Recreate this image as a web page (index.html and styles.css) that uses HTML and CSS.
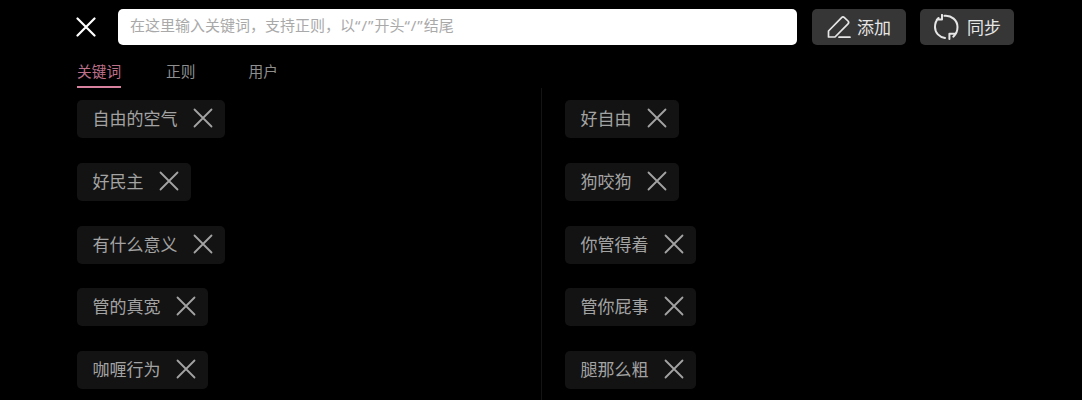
FILE: index.html
```html
<!DOCTYPE html>
<html lang="zh">
<head>
<meta charset="utf-8">
<title>关键词</title>
<link rel="stylesheet" href="styles.css">
</head>
<body>
<div class="page">
  <header class="topbar">
    <svg class="close" viewBox="0 0 20 20"><path d="M1.5 1.5 18.5 18.5M18.5 1.5 1.5 18.5"/></svg>
    <div class="search">在这里输入关键词，支持正则，以<span class="q">“/”</span>开头<span class="q">“/”</span>结尾</div>
    <div class="btn add">
      <svg class="ico" viewBox="0 0 24 24"><path d="M1.5 22v-6L14.6 2.6a2 2 0 0 1 2.8 0l3.6 3.4a2 2 0 0 1 0 2.8L8 22H1.5zM12 22.2h11"/></svg>
      <span>添加</span>
    </div>
    <div class="btn sync">
      <svg class="ico-sync" viewBox="934 13.5 25 27"><path d="M938.5 17.5C936.300 19.800 935 22.800 935 26.500 935 32.300 939.300 36.800 945 37.400M944.500 15.300C951.500 14.600 957.500 19.800 957.500 26.500 957.500 30.200 956 33.800 953.300 36.200M936.800 19H942V14.400M955 33.300H949.400V38.600"/></svg>
      <span>同步</span>
    </div>
  </header>
  <nav class="tabs">
    <div class="tab active">关键词</div>
    <div class="tab second">正则</div>
    <div class="tab">用户</div>
  </nav>
  <main class="lists">
    <section class="col left">
      <div class="chip"><span>自由的空气</span><svg class="x" viewBox="0 0 20 20"><path d="M1.5 1.5 18.5 18.5M18.5 1.5 1.5 18.5"/></svg></div>
      <div class="chip"><span>好民主</span><svg class="x" viewBox="0 0 20 20"><path d="M1.5 1.5 18.5 18.5M18.5 1.5 1.5 18.5"/></svg></div>
      <div class="chip"><span>有什么意义</span><svg class="x" viewBox="0 0 20 20"><path d="M1.5 1.5 18.5 18.5M18.5 1.5 1.5 18.5"/></svg></div>
      <div class="chip"><span>管的真宽</span><svg class="x" viewBox="0 0 20 20"><path d="M1.5 1.5 18.5 18.5M18.5 1.5 1.5 18.5"/></svg></div>
      <div class="chip"><span>咖喱行为</span><svg class="x" viewBox="0 0 20 20"><path d="M1.5 1.5 18.5 18.5M18.5 1.5 1.5 18.5"/></svg></div>
    </section>
    <section class="col right">
      <div class="chip"><span>好自由</span><svg class="x" viewBox="0 0 20 20"><path d="M1.5 1.5 18.5 18.5M18.5 1.5 1.5 18.5"/></svg></div>
      <div class="chip"><span>狗咬狗</span><svg class="x" viewBox="0 0 20 20"><path d="M1.5 1.5 18.5 18.5M18.5 1.5 1.5 18.5"/></svg></div>
      <div class="chip"><span>你管得着</span><svg class="x" viewBox="0 0 20 20"><path d="M1.5 1.5 18.5 18.5M18.5 1.5 1.5 18.5"/></svg></div>
      <div class="chip"><span>管你屁事</span><svg class="x" viewBox="0 0 20 20"><path d="M1.5 1.5 18.5 18.5M18.5 1.5 1.5 18.5"/></svg></div>
      <div class="chip"><span>腿那么粗</span><svg class="x" viewBox="0 0 20 20"><path d="M1.5 1.5 18.5 18.5M18.5 1.5 1.5 18.5"/></svg></div>
    </section>
  </main>
</div>
</body>
</html>
```
FILE: styles.css
```css
* { box-sizing: border-box; }
html, body { margin: 0; padding: 0; background: #000; }
body { font-family: "Noto Sans CJK SC", "Noto Sans", sans-serif; overflow: hidden; }
.page { width: 1082px; height: 400px; overflow: hidden; padding-top: 9px; }

.topbar { display: flex; align-items: center; height: 36px; padding-left: 76px; }
.close { width: 20px; height: 20px; fill: none; stroke: #fff; stroke-width: 2.2; stroke-linecap: round; flex: none; }
.search { width: 679px; height: 36px; margin-left: 22px; padding-left: 12px; background: #fff; border-radius: 5px; color: #a9a9a9; font-family: "Noto Sans", "Noto Sans CJK SC", sans-serif; font-size: 15px; line-height: 33px; white-space: nowrap; }
.q { letter-spacing: 1px; }
.btn { display: flex; align-items: center; width: 94px; height: 36px; background: #363636; border-radius: 5px; color: #e6e6e6; font-size: 17px; line-height: 34px; flex: none; }
.add { margin-left: 15px; padding-left: 15px; gap: 6px; }
.sync { margin-left: 14px; padding-left: 14px; gap: 9px; }
.ico { width: 24px; height: 24px; fill: none; stroke: #e6e6e6; stroke-width: 1.7; stroke-linecap: round; stroke-linejoin: round; flex: none; }
.ico-sync { width: 25px; height: 27px; fill: none; stroke: #e6e6e6; stroke-width: 2; stroke-linecap: round; stroke-linejoin: round; flex: none; }
.sync span { margin-left: -1px; }

.tabs { display: flex; height: 44px; padding: 8px 0 0 77px; }
.tab { height: 35px; font-size: 14.7px; line-height: 36px; color: #8f8f8f; }
.tab.second { margin-right: 53px; }
.tab.active { color: #bd7089; margin-right: 45px; border-bottom: 2.5px solid #d9829f; }

.lists { display: grid; grid-template-columns: 541px 1fr; margin-top: -1px; }
.col { display: flex; flex-direction: column; align-items: flex-start; gap: 24.8px; padding-top: 12px; height: 330px; }
.left { padding-left: 77px; }
.right { padding-left: 23px; border-left: 1px solid #141414; }
.chip { display: flex; align-items: center; height: 38px; padding: 0 12px 2px 15.5px; background: #131313; border-radius: 5px; color: #a3a3a3; font-size: 17px; line-height: 34px; white-space: nowrap; }
.x { width: 20px; height: 20px; margin-left: 15.5px; fill: none; stroke: #a3a3a3; stroke-width: 1.8; stroke-linecap: round; flex: none; }
```
